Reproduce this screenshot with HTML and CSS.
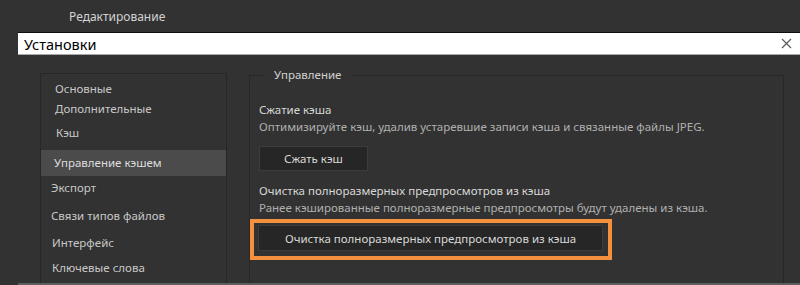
FILE: index.html
```html
<!DOCTYPE html>
<html lang="ru">
<head>
<meta charset="utf-8">
<title>Установки</title>
<link rel="stylesheet" href="styles.css">
</head>
<body>
<div class="app">
  <div class="menubar"><span class="menu-item">Редактирование</span></div>
  <div class="search">
    <span class="search-text">Установки</span>
    <svg class="close" width="11" height="11" viewBox="0 0 11 11"><path d="M1 1L10 10M10 1L1 10" stroke="#5a5a5a" stroke-width="1.2" fill="none"/></svg>
  </div>
  <div class="main">
    <div class="sidebar">
      <div class="item i1">Основные</div>
      <div class="item i2">Дополнительные</div>
      <div class="item i3">Кэш</div>
      <div class="item selected">Управление кэшем</div>
      <div class="item i5">Экспорт</div>
      <div class="item i6">Связи типов файлов</div>
      <div class="item i7">Интерфейс</div>
      <div class="item i8">Ключевые слова</div>
    </div>
    <fieldset class="panel">
      <legend class="legend">Управление</legend>
      <div class="title first">Сжатие кэша</div>
      <div class="desc">Оптимизируйте кэш, удалив устаревшие записи кэша и связанные файлы JPEG.</div>
      <button class="btn btn-small">Сжать кэш</button>
      <div class="title second">Очистка полноразмерных предпросмотров из кэша</div>
      <div class="desc">Ранее кэшированные полноразмерные предпросмотры будут удалены из кэша.</div>
      <div class="highlight">
        <button class="btn btn-wide">Очистка полноразмерных предпросмотров из кэша</button>
      </div>
    </fieldset>
  </div>
</div>
</body>
</html>
```
FILE: styles.css
```css
html, body {
  margin: 0;
  padding: 0;
  background: #323232;
}
body {
  width: 800px;
  height: 285px;
  overflow: hidden;
  font-family: "Noto Sans", "Open Sans", sans-serif;
  font-size: 11.5px;
  color: #c8c8c8;
}
.app {
  width: 800px;
  height: 285px;
  display: flex;
  flex-direction: column;
}
.menubar {
  height: 32px;
  line-height: 33px;
  padding-left: 69px;
  color: #d2d2d2;
  font-size: 12px;
  box-sizing: border-box;
}
.search {
  margin-left: 18px;
  height: 23px;
  box-sizing: border-box;
  background: #ffffff;
  border-top: 1px solid #0e0e0e;
  border-bottom: 1px solid #a8a8a8;
  display: flex;
  align-items: center;
  justify-content: space-between;
  padding: 0 8px 0 6px;
}
.search-text {
  font-size: 14.5px;
  color: #000;
  line-height: 20px;
}
.close {
  display: block;
}
.main {
  flex: 1;
  display: flex;
  margin-left: 18px;
  border-bottom: 2px solid #5e5e5e;
  min-height: 0;
}
.sidebar {
  margin-left: 22px;
  margin-top: 18px;
  width: 187px;
  box-sizing: border-box;
  border: 1px solid #272727;
  border-bottom: none;
  padding-top: 5px;
}
.item {
  line-height: 20px;
  height: 20px;
  white-space: nowrap;
}
.i1 { padding-left: 14px; }
.i2 { padding-left: 14px; }
.i3 { padding-left: 15px; margin-top: 4px; }
.selected {
  background: #4b4b4b;
  height: 26px;
  line-height: 26px;
  margin-top: 7px;
  padding-left: 13px;
  color: #dedede;
}
.i5 { padding-left: 10px; margin-top: 2px; }
.i6 { padding-left: 10px; margin-top: 8px; }
.i7 { padding-left: 11px; margin-top: 7px; }
.i8 { padding-left: 11px; margin-top: 5px; }
.panel {
  margin: 12px 0 0 22px;
  width: 535px;
  box-sizing: border-box;
  border: 1px solid #272727;
  border-bottom: none;
  padding: 0 9px;
  min-width: 0;
}
.legend {
  margin-left: 5px;
  padding: 0 10px;
  line-height: 16px;
  color: #d0d0d0;
}
.title {
  line-height: 16px;
  color: #d8d8d8;
}
.first { margin-top: 19px; }
.second { margin-top: 12px; }
.desc {
  line-height: 18px;
  color: #b0b0b0;
}
.btn {
  display: block;
  font-family: inherit;
  font-size: 11.5px;
  color: #d8d8d8;
  background: #262626;
  border: 1px solid #3c3c3c;
  padding: 0;
  margin: 0;
}
.btn-small {
  margin-top: 10px;
  width: 109px;
  height: 25px;
}
.highlight {
  margin-top: 2px;
  margin-left: -9px;
  width: 362px;
  box-sizing: border-box;
  border: 4px solid #f5903f;
  padding: 2px 5px 5px 4px;
}
.btn-wide {
  width: 100%;
  height: 26px;
}
```
